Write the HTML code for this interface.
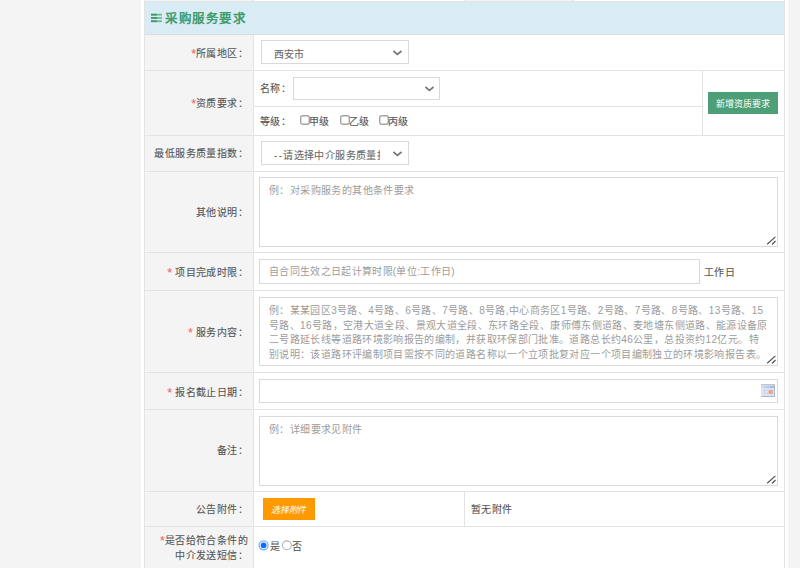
<!DOCTYPE html>
<html lang="zh-CN">
<head>
<meta charset="utf-8">
<style>
*{box-sizing:border-box;margin:0;padding:0}
html,body{width:800px;height:568px;overflow:hidden;background:#f4f4f4;font-family:"Liberation Sans",sans-serif;font-size:10px;color:#555}
.lt,.txt{-webkit-text-stroke:0.1px currentColor}
.txt.ph{-webkit-text-stroke:0}
.abs{position:absolute}
#wrap{position:absolute;left:141px;top:0;width:647px;height:568px;background:#fff}
.hl{position:absolute;height:1px;background:#e3e3e3}
.vl{position:absolute;width:1px;background:#e3e3e3}
.lab{position:absolute;left:145px;width:108px;background:#f4f4f4}
.lt{position:absolute;right:552px;white-space:nowrap;line-height:14px;text-align:right;letter-spacing:0.4px}
.req{color:#f06a6a;font-size:12.5px;position:relative;top:1px;letter-spacing:0}
.box{position:absolute;border:1px solid #d9d9d9;background:#fff}
.txt{position:absolute;white-space:nowrap;line-height:14px;letter-spacing:0.4px}
.ph{color:#9c9c9c}
.chev{position:absolute}
</style>
</head>
<body>
<div id="wrap"></div>
<!-- label column backgrounds -->
<div class="lab" style="top:0;height:1px"></div>
<div class="abs" style="left:465px;top:0;width:108px;height:1px;background:#f4f4f4"></div>
<div class="vl" style="left:464px;top:0;height:2px"></div>
<div class="vl" style="left:573px;top:0;height:2px"></div>
<div class="lab" style="top:35px;height:533px"></div>
<!-- header -->
<div class="abs" style="left:145px;top:2px;width:639px;height:32px;background:#d9ebf5"></div>
<svg class="abs" style="left:151px;top:13px" width="11" height="10" viewBox="0 0 11 10">
<rect x="0" y="0.8" width="11" height="1.7" fill="#6db592"/>
<rect x="0" y="4.1" width="11" height="1.7" fill="#6db592"/>
<rect x="0" y="7.4" width="11" height="1.7" fill="#6db592"/>
<rect x="0" y="0.8" width="6" height="1.7" fill="#3e9464"/>
<rect x="0" y="4.1" width="6" height="1.7" fill="#3e9464"/>
<rect x="0" y="7.4" width="6" height="1.7" fill="#3e9464"/>
</svg>
<div class="txt" style="left:165px;top:11px;font-size:12.5px;line-height:17px;font-weight:bold;color:#419c6c;letter-spacing:0.55px;-webkit-text-stroke:0">采购服务要求</div>

<!-- borders -->
<div class="hl" style="left:144px;top:1px;width:641px"></div>
<div class="hl" style="left:144px;top:34px;width:641px;background:#dcdcdc"></div>
<div class="hl" style="left:144px;top:70px;width:641px"></div>
<div class="hl" style="left:254px;top:106px;width:448px"></div>
<div class="hl" style="left:144px;top:135px;width:641px"></div>
<div class="hl" style="left:144px;top:171px;width:641px"></div>
<div class="hl" style="left:144px;top:252px;width:641px"></div>
<div class="hl" style="left:144px;top:290px;width:641px"></div>
<div class="hl" style="left:144px;top:372px;width:641px"></div>
<div class="hl" style="left:144px;top:409px;width:641px"></div>
<div class="hl" style="left:144px;top:491px;width:641px"></div>
<div class="hl" style="left:144px;top:526px;width:641px"></div>
<div class="vl" style="left:144px;top:0;height:568px"></div>
<div class="vl" style="left:784px;top:0;height:568px"></div>
<div class="vl" style="left:253px;top:0;height:2px"></div>
<div class="vl" style="left:253px;top:35px;height:533px"></div>
<div class="vl" style="left:702px;top:70px;height:65px"></div>
<div class="vl" style="left:464px;top:491px;height:35px"></div>

<!-- labels -->
<div class="lt" style="top:46px"><span class="req">*</span>所属地区：</div>
<div class="lt" style="top:96px"><span class="req">*</span>资质要求：</div>
<div class="lt" style="top:147px">最低服务质量指数：</div>
<div class="lt" style="top:206px">其他说明：</div>
<div class="lt" style="top:265px"><span class="req">*</span> 项目完成时限：</div>
<div class="lt" style="top:325px"><span class="req">*</span> 服务内容：</div>
<div class="lt" style="top:385px"><span class="req">*</span> 报名截止日期：</div>
<div class="lt" style="top:444px">备注：</div>
<div class="lt" style="top:503px">公告附件：</div>
<div class="lt" style="top:533px;line-height:14.5px"><span class="req">*</span>是否给符合条件的<br>中介发送短信：</div>

<!-- row1 select -->
<div class="box" style="left:261px;top:40px;width:148px;height:24px"></div>
<div class="txt" style="left:274px;top:48px;color:#666;letter-spacing:0.2px">西安市</div>
<svg class="chev" style="left:393px;top:50px" width="10" height="6" viewBox="0 0 10 6"><path d="M0.4 1 L4.4 4.3 L8.5 1" fill="none" stroke="#767676" stroke-width="1.7"/></svg>

<!-- row2 -->
<div class="txt" style="left:260px;top:82px">名称：</div>
<div class="box" style="left:293px;top:77px;width:147px;height:23px"></div>
<svg class="chev" style="left:425px;top:86px" width="10" height="6" viewBox="0 0 10 6"><path d="M0.4 1 L4.4 4.3 L8.5 1" fill="none" stroke="#767676" stroke-width="1.7"/></svg>
<div class="txt" style="left:260px;top:115px">等级：</div>
<svg class="abs" style="left:300px;top:115px" width="10" height="10" viewBox="0 0 10 10"><rect x="0.7" y="0.7" width="8.6" height="8.6" rx="2" fill="#fff" stroke="#a3a3a3" stroke-width="1.4"/></svg>
<div class="txt" style="left:309px;top:115px">甲级</div>
<svg class="abs" style="left:340px;top:115px" width="10" height="10" viewBox="0 0 10 10"><rect x="0.7" y="0.7" width="8.6" height="8.6" rx="2" fill="#fff" stroke="#a3a3a3" stroke-width="1.4"/></svg>
<div class="txt" style="left:349px;top:115px">乙级</div>
<svg class="abs" style="left:379px;top:115px" width="10" height="10" viewBox="0 0 10 10"><rect x="0.7" y="0.7" width="8.6" height="8.6" rx="2" fill="#fff" stroke="#a3a3a3" stroke-width="1.4"/></svg>
<div class="txt" style="left:388px;top:115px">丙级</div>
<div class="abs" style="left:708px;top:92px;width:70px;height:22px;background:#4c9f76"></div>
<div class="txt" style="left:716px;top:97px;font-size:9px;color:#fff;letter-spacing:0px;-webkit-text-stroke:0">新增资质要求</div>

<!-- row3 select -->
<div class="box" style="left:261px;top:141px;width:148px;height:24px"></div>
<div class="txt" style="left:274px;top:149px;width:106px;overflow:hidden;color:#6a6a6a"><span style="letter-spacing:1.3px">--</span>请选择中介服务质量指数</div>
<svg class="chev" style="left:393px;top:151px" width="10" height="6" viewBox="0 0 10 6"><path d="M0.4 1 L4.4 4.3 L8.5 1" fill="none" stroke="#767676" stroke-width="1.7"/></svg>

<!-- row4 textarea -->
<div class="box" style="left:259px;top:177px;width:519px;height:70px"></div>
<div class="txt ph" style="left:269px;top:184px">例：对采购服务的其他条件要求</div>
<svg class="abs" style="left:766px;top:236px" width="10" height="9" viewBox="0 0 10 9"><path d="M1.2 8.3 L9.4 0.9 M6 8.5 L9.5 5" stroke="#555" stroke-width="1.25"/></svg>

<!-- row5 input -->
<div class="box" style="left:259px;top:259px;width:441px;height:25px"></div>
<div class="txt ph" style="left:269px;top:265px;letter-spacing:0.32px">自合同生效之日起计算时限(单位:工作日)</div>
<div class="txt" style="left:704px;top:266px">工作日</div>

<!-- row6 textarea -->
<div class="box" style="left:259px;top:297px;width:519px;height:69px"></div>
<div class="txt ph" style="left:269px;top:304px;line-height:14.5px;letter-spacing:0.36px">例：某某园区3号路、4号路、6号路、7号路、8号路,中心商务区1号路、2号路、7号路、8号路、13号路、15<br>号路、16号路，空港大道全段、景观大道全段、东环路全段、康师傅东侧道路、麦地塘东侧道路、能源设备原<br>二号路延长线等道路环境影响报告的编制，并获取环保部门批准。道路总长约46公里，总投资约12亿元。特<br>别说明：该道路环评编制项目需按不同的道路名称以一个立项批复对应一个项目编制独立的环境影响报告表。</div>
<svg class="abs" style="left:766px;top:355px" width="10" height="9" viewBox="0 0 10 9"><path d="M1.2 8.3 L9.4 0.9 M6 8.5 L9.5 5" stroke="#555" stroke-width="1.25"/></svg>

<!-- row7 date -->
<div class="box" style="left:259px;top:379px;width:519px;height:24px"></div>
<svg class="abs" style="left:761px;top:384px" width="14" height="13" viewBox="0 0 14 13">
<defs><linearGradient id="band" x1="0" x2="1" y1="0" y2="0"><stop offset="0" stop-color="#d3def8"/><stop offset="1" stop-color="#9bb6ee"/></linearGradient></defs>
<rect x="0" y="0" width="14" height="1.6" fill="#c9c6bd"/>
<rect x="0" y="1.5" width="14" height="11.5" fill="#e3eaf6"/>
<rect x="0" y="1.5" width="14" height="2.6" fill="url(#band)"/>
<path d="M0.5 6.6H13.5M0.5 9.1H13.5M3.6 4V12.5M7 4V12.5M10.4 4V12.5" stroke="#c3d0e4" stroke-width="0.8"/>
<path d="M13.5 1.5V12.5H0.5" fill="none" stroke="#a9b7cc" stroke-width="1"/>
<circle cx="9.8" cy="8" r="2.3" fill="#f3a080"/>
</svg>

<!-- row8 textarea -->
<div class="box" style="left:259px;top:416px;width:519px;height:70px"></div>
<div class="txt ph" style="left:269px;top:423px">例：详细要求见附件</div>
<svg class="abs" style="left:766px;top:475px" width="10" height="9" viewBox="0 0 10 9"><path d="M1.2 8.3 L9.4 0.9 M6 8.5 L9.5 5" stroke="#555" stroke-width="1.25"/></svg>

<!-- row9 -->
<div class="abs" style="left:263px;top:498px;width:52px;height:22px;background:#ff9900"></div>
<div class="txt" style="left:271px;top:503px;font-size:9px;color:#fff;font-style:italic;letter-spacing:-0.2px;-webkit-text-stroke:0">选择附件</div>
<div class="txt" style="left:471px;top:503px">暂无附件</div>

<!-- row10 radios -->
<svg class="abs" style="left:258px;top:540px" width="11" height="11" viewBox="0 0 11 11"><circle cx="5.6" cy="5.3" r="4.5" fill="#fff" stroke="#7db0f6" stroke-width="1.3"/><circle cx="5.6" cy="5.3" r="2.9" fill="#0a6cff"/></svg>
<div class="txt" style="left:270px;top:540px">是</div>
<svg class="abs" style="left:281px;top:540px" width="11" height="11" viewBox="0 0 11 11"><circle cx="5.9" cy="5.3" r="4.4" fill="#fff" stroke="#b5b5b5" stroke-width="1.1"/></svg>
<div class="txt" style="left:292px;top:540px">否</div>
</body>
</html>
